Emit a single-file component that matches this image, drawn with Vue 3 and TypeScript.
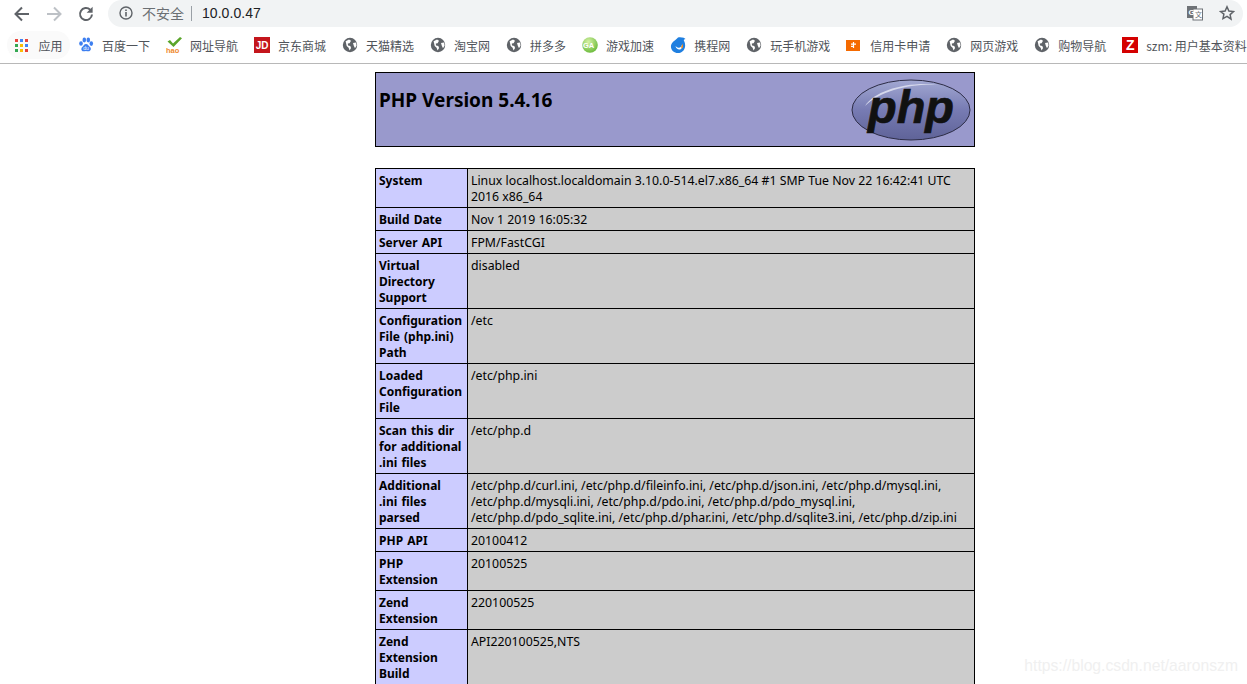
<script setup lang="ts">
interface Mark { label: string; icon: string }
const marks: Mark[] = [
  { label: '百度一下', icon: 'baidu' },
  { label: '网址导航', icon: 'hao' },
  { label: '京东商城', icon: 'jd' },
  { label: '天猫精选', icon: 'globe' },
  { label: '淘宝网', icon: 'globe' },
  { label: '拼多多', icon: 'globe' },
  { label: '游戏加速', icon: 'game' },
  { label: '携程网', icon: 'ctrip' },
  { label: '玩手机游戏', icon: 'globe' },
  { label: '信用卡申请', icon: 'card' },
  { label: '网页游戏', icon: 'globe' },
  { label: '购物导航', icon: 'globe' },
  { label: 'szm: 用户基本资料', icon: 'z' },
]
const appColors = ['#e8453c', '#4285f4', '#e8453c', '#34a853', '#fbbc05', '#4285f4', '#34a853', '#fbbc05', '#ea4335']
const rows: [string, string][] = [
  ['System', 'Linux localhost.localdomain 3.10.0-514.el7.x86_64 #1 SMP Tue Nov 22 16:42:41 UTC 2016 x86_64'],
  ['Build Date', 'Nov 1 2019 16:05:32'],
  ['Server API', 'FPM/FastCGI'],
  ['Virtual Directory Support', 'disabled'],
  ['Configuration File (php.ini) Path', '/etc'],
  ['Loaded Configuration File', '/etc/php.ini'],
  ['Scan this dir for additional .ini files', '/etc/php.d'],
  ['Additional .ini files parsed', '/etc/php.d/curl.ini, /etc/php.d/fileinfo.ini, /etc/php.d/json.ini, /etc/php.d/mysql.ini, /etc/php.d/mysqli.ini, /etc/php.d/pdo.ini, /etc/php.d/pdo_mysql.ini, /etc/php.d/pdo_sqlite.ini, /etc/php.d/phar.ini, /etc/php.d/sqlite3.ini, /etc/php.d/zip.ini'],
  ['PHP API', '20100412'],
  ['PHP Extension', '20100525'],
  ['Zend Extension', '220100525'],
  ['Zend Extension Build', 'API220100525,NTS'],
]
</script>

<template>
  <div class="page">
    <header class="toolbar">
      <svg class="nav" width="18" height="18" viewBox="0 0 18 18"><path d="M16 9H3M9 2.500 2.500 9 9 15.500" fill="none" stroke="#5f6368" stroke-width="2"/></svg>
      <svg class="nav" width="18" height="18" viewBox="0 0 18 18"><path d="M2 9h13M9 2.500 15.500 9 9 15.500" fill="none" stroke="#bdc1c6" stroke-width="2"/></svg>
      <svg class="nav" width="18" height="18" viewBox="0 0 18 18"><path d="M15 9.500A6 6 0 1 1 13.200 4.700" fill="none" stroke="#5f6368" stroke-width="2"/><path d="M15.600 1.800v6h-6z" fill="#5f6368"/></svg>
      <div class="omnibox">
        <svg width="14" height="14" viewBox="0 0 14 14"><circle cx="7" cy="7" r="6" fill="none" stroke="#5f6368" stroke-width="1.400"/><path d="M7 6v4.400M7 3.400v1.500" stroke="#5f6368" stroke-width="1.600"/></svg>
        <span class="insecure">不安全</span>
        <span class="sep"></span>
        <span class="url">10.0.0.47</span>
        <span class="spacer"></span>
        <svg class="tr" width="16" height="16" viewBox="0 0 16 16"><rect x="0" y="1" width="10" height="12" fill="#6e7276"/><rect x="6" y="4" width="9.500" height="11" fill="#fff" stroke="#6e7276"/><text x="1.500" y="10" font-size="8" font-weight="700" fill="#fff" font-family="Liberation Sans">G</text><text x="8" y="12" font-size="7" fill="#6e7276" font-family="Noto Sans CJK SC">文</text></svg>
        <svg width="16" height="16" viewBox="0 0 16 16"><path d="m8 1.800 1.900 4.200 4.600.5-3.400 3.100.9 4.500L8 11.300l-4 2.300.9-4.500L1.500 6.500l4.600-.5z" fill="none" stroke="#5f6368" stroke-width="1.500"/></svg>
      </div>
    </header>

    <nav class="bookmarks">
      <div class="mark apps">
        <span class="grid"><i v-for="(c, i) in appColors" :key="i" :style="{ background: c }"></i></span>
        <span>应用</span>
      </div>
      <div v-for="m in marks" :key="m.label" class="mark">
        <svg v-if="m.icon === 'globe'" width="16" height="16" viewBox="0 0 16 16"><circle cx="8" cy="8" r="7.200" fill="#5f6368"/><path d="M3.600 4.200 7 2.600l2 1.200-1.400 2.400-1.800.4.2 2 2.300.4.8 2-1.500 2.400-1-2.600-1.900-1.800zM11 6l3-.6.6 3-1.600 2.800-1.200-2.400z" fill="#fff"/></svg>
        <svg v-else-if="m.icon === 'baidu'" width="16" height="16" viewBox="0 0 16 16"><g fill="#3d7ff0"><ellipse cx="3" cy="6.500" rx="1.800" ry="2.300"/><ellipse cx="6.300" cy="3" rx="1.800" ry="2.400"/><ellipse cx="10.300" cy="3" rx="1.800" ry="2.400"/><ellipse cx="13.300" cy="6.600" rx="1.800" ry="2.300"/><path d="M8 7c2 0 2.400 1.700 4 3 1.700 1.600.7 4.600-1.800 4.300-1-.1-1.500-.4-2.200-.4s-1.300.4-2.300.4C3.300 14.600 2.600 11.500 4.300 10 5.800 8.800 6 7 8 7z"/></g><text x="5.200" y="13" font-size="5" fill="#fff" font-family="Liberation Sans">du</text></svg>
        <svg v-else-if="m.icon === 'hao'" width="16" height="16" viewBox="0 0 16 16"><path d="M1.500 4.500 4 3l3 3.500L14 0l2 1.200L7.500 10z" fill="#5aa52a"/><text x="0" y="15.500" font-size="7.500" font-weight="700" fill="#ef8a2d" font-family="Liberation Sans">hao</text></svg>
        <span v-else-if="m.icon === 'jd'" class="square jd">JD</span>
        <svg v-else-if="m.icon === 'game'" width="16" height="16" viewBox="0 0 16 16"><defs><radialGradient id="gg" cx=".4" cy=".3" r=".8"><stop offset="0" stop-color="#d6f2a6"/><stop offset="1" stop-color="#5fb52f"/></radialGradient></defs><circle cx="8" cy="8" r="7.800" fill="url(#gg)"/><text x="1" y="10.500" font-size="7.500" font-weight="700" fill="#fff" font-family="Liberation Sans">GA</text></svg>
        <svg v-else-if="m.icon === 'ctrip'" width="16" height="17" viewBox="0 0 16 17"><path d="M8 .5c4-.6 7 .8 7.500 1.500-1.600.2-2 1-1.400 2 1.500 2.500 1.500 6.500-.6 9.500-2.500 3-7.500 3.500-10.500.8C.5 12 .2 8 2.500 5.500 4 3.800 6 3 8 .5z" fill="#1f7fe0"/><path d="M5.500 9c.5 3 3.500 4.500 5.500 3 1.500-1 1.800-3 1-4.500-.3 2-1.800 3.500-3.500 3.200C7 10.500 6.200 9.800 5.500 9z" fill="#fff"/><path d="M11 9.500c1-.5 1.400-1.500 1-3 1.500 1.500 1.500 4-.3 5.300z" fill="#f28a1c"/></svg>
        <span v-else-if="m.icon === 'card'" class="card"><svg width="14" height="10" viewBox="0 0 14 10"><path d="M7.500 2v6M5 4.200h5M5 6.300h2.500" stroke="#fff" stroke-width="1.200" fill="none"/></svg></span>
        <span v-else class="square z">Z</span>
        <span>{{ m.label }}</span>
      </div>
    </nav>

    <main class="content">
      <table class="head">
        <tbody>
          <tr>
            <td>
              <h1>PHP Version 5.4.16</h1>
              <svg class="logo" width="120" height="64" viewBox="0 0 120 64">
                <defs>
                  <linearGradient id="lg" x1="0" y1="0" x2="0" y2="1"><stop offset="0" stop-color="#a2a8d2"/><stop offset=".5" stop-color="#777bb3"/><stop offset="1" stop-color="#5f6398"/></linearGradient>
                </defs>
                <ellipse cx="60" cy="32" rx="59" ry="30" fill="url(#lg)" stroke="#2c2c45" stroke-width="1"/>
                <path d="M14 28C24 12 58 3 88 7 62 5 30 12 14 28z" fill="#d5d8ec"/>
                <text x="17" y="45" font-size="46" font-weight="700" font-style="italic" fill="#111" stroke="#111" stroke-width=".7" textLength="86" lengthAdjust="spacingAndGlyphs" font-family="Liberation Sans">php</text>
              </svg>
            </td>
          </tr>
        </tbody>
      </table>
      <table class="info">
        <tbody>
          <tr v-for="r in rows" :key="r[0]">
            <td class="e">{{ r[0] }}</td>
            <td class="v">{{ r[1] }}</td>
          </tr>
        </tbody>
      </table>
    </main>
    <div class="watermark">https://blog.csdn.net/aaronszm</div>
  </div>
</template>

<style scoped>
.page {
  position: relative;
  width: 1247px;
  height: 684px;
  overflow: hidden;
  background: #fff;
  font-family: "Noto Sans", "Noto Sans CJK SC", sans-serif;
}
.toolbar {
  display: flex;
  align-items: center;
  height: 27px;
  padding-left: 13px;
  gap: 14px;
}
.nav { flex: none; }
.omnibox {
  flex: none;
  margin-left: -1px;
  width: 1135px;
  height: 27px;
  box-sizing: border-box;
  background: #f1f3f4;
  border-radius: 14px;
  display: flex;
  align-items: center;
  padding: 0 8px 1px 11px;
  font-family: "Noto Sans CJK SC", sans-serif;
}
.insecure { margin-left: 9px; font-size: 14px; color: #6b6f73; }
.sep { width: 1px; height: 15px; background: #9aa0a6; margin: 0 10px 0 7px; }
.url { font-size: 14px; color: #202124; font-family: "Liberation Sans", sans-serif; letter-spacing: .05px; }
.spacer { flex: 1; }
.tr { margin-right: 16px; }
.bookmarks {
  display: flex;
  align-items: center;
  height: 36px;
  border-bottom: 1px solid #b8b8b8;
  padding-left: 7px;
  white-space: nowrap;
  overflow: hidden;
  font-family: "Noto Sans CJK SC", sans-serif;
  font-size: 12px;
  color: #50545a;
}
.mark {
  flex: none;
  display: flex;
  align-items: center;
  gap: 8px;
  height: 28px;
  padding: 0 8px 0 8px;
}
.apps { background: #fafafa; border-radius: 14px; gap: 10.5px; padding-right: 7.5px; }
.grid { display: grid; grid-template-columns: repeat(3, 3px); gap: 2px; width: 13px; }
.grid i { display: block; width: 3px; height: 3px; }
.square {
  width: 16px;
  height: 16px;
  display: flex;
  align-items: center;
  justify-content: center;
  color: #fff;
  font-family: "Liberation Sans", sans-serif;
  font-weight: 700;
}
.jd { background: #c4161c; font-size: 10px; }
.z { background: #d40000; font-size: 14px; }
.card {
  width: 14px;
  height: 11px;
  margin-right: 2px;
  background: #f56a00;
  display: flex;
}
.content {
  padding: 8px 0 0 375px;
  display: flex;
  flex-direction: column;
  align-items: flex-start;
  font-family: "Noto Sans", sans-serif;
  font-size: 12.3px;
  line-height: 16px;
  color: #000;
}
table {
  width: 600px;
  border-collapse: collapse;
  table-layout: fixed;
}
td {
  border: 1px solid #000;
  padding: 4px 3px 2px;
  vertical-align: top;
}
.head { margin-bottom: 21px; }
.head td {
  background: #9999cc;
  height: 67px;
  box-sizing: content-box;
  position: relative;
}
.head h1 {
  margin: 9px 0 0;
  font-size: 19px;
  line-height: 28px;
  font-weight: 700;
}
.logo { position: absolute; right: 3px; top: 5px; }
.e {
  width: 84px;
  padding-right: 4px;
  background: #ccccff;
  font-weight: 700;
  font-size: 12px;
  word-spacing: 1px;
}
.v { background: #cccccc; }
.watermark {
  position: absolute;
  right: 9px;
  top: 657px;
  font-family: "Liberation Sans", sans-serif;
  font-size: 15.7px;
  color: #f0f0f0;
  white-space: nowrap;
}
</style>
